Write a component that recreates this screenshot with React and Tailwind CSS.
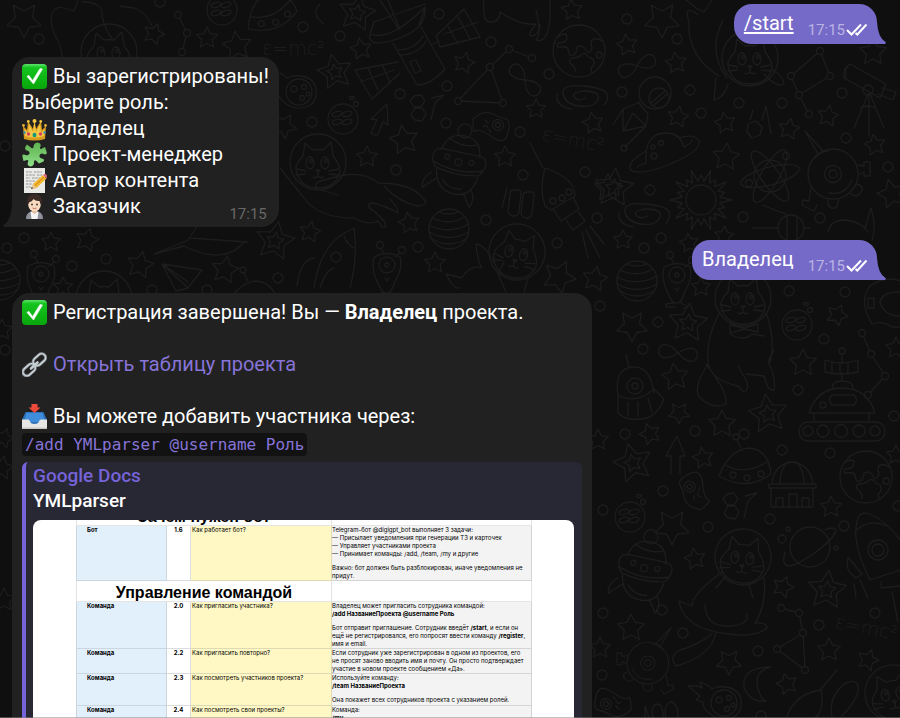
import React from "react";

/* ---------- Wallpaper doodles ---------- */

function starPoints(cx, cy, r, turn) {
  const pts = [];
  for (let i = 0; i < 10; i++) {
    const a = ((turn - 90 + i * 36) * Math.PI) / 180;
    const d = i % 2 ? r * 0.5 : r;
    pts.push(`${(cx + d * Math.cos(a)).toFixed(1)},${(cy + d * Math.sin(a)).toFixed(1)}`);
  }
  return pts.join(" ");
}

const STARS = [
  [662, 20, 18, 180], [627, 45, 11, -10], [676, 63, 11, -8], [678, 117, 11, 10], [725, 123, 11, -10],
  [789, 129, 11, 10], [828, 116, 11, 10], [726, 157, 14, 5], [875, 145, 11, -10], [892, 194, 15, -15],
  [873, 52, 14, 0], [623, 240, 10, 0], [689, 243, 10, -8], [724, 236, 10, 5], [701, 287, 10, 0],
  [632, 326, 16, 180], [837, 315, 11, 25], [803, 363, 14, 0], [896, 348, 11, 0], [675, 377, 14, -8],
  [679, 413, 11, 180], [650, 434, 11, -20], [722, 424, 14, 0], [703, 458, 11, -10], [896, 455, 10, 0],
  [672, 527, 18, 180], [695, 559, 11, -10], [831, 507, 11, 0], [783, 587, 11, 20], [631, 628, 14, 0],
  [829, 650, 12, 0], [729, 662, 13, 180], [868, 660, 11, 20], [787, 684, 11, -15], [361, 49, 11, -10],
  [464, 63, 11, 15], [572, 10, 11, -5], [536, 109, 10, 0], [593, 123, 11, -10], [284, 126, 13, 30],
  [404, 140, 15, -10], [367, 157, 11, 0], [505, 157, 11, 0], [409, 223, 11, -10], [310, 232, 11, 10],
  [435, 263, 11, 0], [559, 277, 17, 25], [595, 279, 13, 10], [608, 188, 14, 0], [24, 20, 18, 180],
  [154, 34, 11, 20], [207, 38, 11, 0], [237, 46, 15, -8], [51, 242, 10, 0], [87, 240, 12, 15],
  [140, 265, 14, 12], [225, 270, 14, 10], [63, 287, 10, 0], [2, 330, 11, 0], [4, 438, 10, 20],
  [598, 440, 11, 0], [600, 648, 11, 0], [4, 600, 12, 0], [2, 468, 12, 10],
];

const DOUBLE_STARS = [
  [614, 188, 20, 5], [688, 323, 20, 5], [768, 414, 20, -8], [633, 463, 20, -15], [827, 590, 20, 5],
  [357, 13, 19, 10], [335, 72, 18, -12], [275, 241, 20, 10],
];

const DOTS = [
  [627, 19], [677, 39], [622, 92], [690, 90], [701, 113], [739, 103], [782, 103], [842, 93], [846, 138],
  [888, 167], [650, 190], [743, 217], [820, 218], [644, 248], [661, 238], [658, 322], [643, 349], [789, 291],
  [845, 292], [824, 339], [798, 390], [894, 416], [695, 431], [744, 434], [625, 434], [782, 450], [830, 453],
  [663, 491], [708, 527], [770, 519], [844, 526], [898, 506], [603, 510], [662, 610], [683, 633], [819, 625],
  [875, 613], [758, 651], [603, 613], [761, 716], [602, 675], [303, 27], [340, 36], [439, 14], [491, 42],
  [549, 74], [447, 86], [400, 94], [446, 123], [312, 122], [520, 132], [523, 175], [585, 172], [396, 170],
  [486, 220], [418, 247], [557, 243], [597, 218], [39, 39], [7, 248], [24, 238], [72, 266], [106, 259],
  [278, 278], [5, 350], [600, 306], [5, 146], [160, 2], [152, 290], [207, 290],
];

const CONSTELLATIONS = [
  [[809, 114], [799, 95], [791, 76], [820, 51], [830, 76], [799, 95]],
  [[532, 58], [509, 49], [490, 67], [458, 101], [503, 103], [490, 67]],
  [[781, 608], [799, 613], [803, 633], [777, 649], [805, 670], [803, 633]],
  [[862, 333], [871, 354], [885, 376], [868, 395]],
  [[178, 15], [187, 33], [182, 52]],
];

function Jupiter({ x, y }) {
  return (
    <g transform={`translate(${x} ${y})`}>
      <circle r="20" />
      <path d="M-17-11Q0-3 16-12M-20-4Q0 6 20-5M-20 3Q0 14 20 3M-17 10Q0 20 17 10M-11-17Q0-13 10-17" />
    </g>
  );
}

function ButtonPlanet({ x, y }) {
  return (
    <g transform={`translate(${x} ${y})`}>
      <circle r="15" />
      <ellipse cx="-6" cy="-5" rx="5" ry="2.5" transform="rotate(-15 -6 -5)" />
      <ellipse cx="4" cy="-5" rx="5" ry="2.5" transform="rotate(-15 4 -5)" />
      <ellipse cx="-6" cy="3" rx="5" ry="2.5" transform="rotate(-15 -6 3)" />
      <ellipse cx="4" cy="3" rx="5" ry="2.5" transform="rotate(-15 4 3)" />
      <circle cx="13" cy="-15" r="2.5" />
      <ellipse cx="9" cy="-21" rx="2.5" ry="1.5" />
    </g>
  );
}

function Earth({ x, y }) {
  return (
    <g transform={`translate(${x} ${y})`}>
      <circle r="26" />
      <path d="M-22-14q10-6 10 0t-9 6q-3 5 3 4t7 2q1 8 5 6t4-8q6-3 9 3t6-2q-3-8 2-9t8 2M-9 12q-2-5 3-5t8-3q4-3 6 0t6 4q3 6-2 9l1 5M-9 12q6 4 5 9" />
      <circle cx="20" cy="4" r="3" />
    </g>
  );
}

function CatHead({ x, y, turn = 0 }) {
  return (
    <g transform={`translate(${x} ${y}) rotate(${turn})`}>
      <circle r="28" />
      <path d="M-15-6l2-13 8 7q6-1 10 0l8-8 2 14M-15-6q-8 8-7 14 4 18 22 18t22-16q0-8-7-16" />
      <ellipse cx="-8" cy="1" rx="4" ry="6" />
      <ellipse cx="7" cy="1" rx="4" ry="6" />
      <circle cx="-7" cy="-1" r="1.5" />
      <circle cx="8" cy="-1" r="1.5" />
      <path d="M-2 8h4l-2 3zM0 11v3q-3 3-5 1M0 14q3 3 5 1M-12 9l-9-2M-12 12l-10 1M11 9l9-2M11 12l10 1" />
    </g>
  );
}

function Alien({ x, y }) {
  return (
    <g transform={`translate(${x} ${y})`}>
      <path d="M-13-12Q0-19 13-12 16 0 8 12q-2 8-6 12h-5q-4-4-7-12-6-12-3-24z" />
      <circle cy="-4" r="8" />
      <circle cy="-4" r="2" />
      <circle cx="-7" cy="-24" r="3.5" />
      <circle cx="15" cy="-19" r="3.5" />
      <path d="M-6-21l3 6M13-16l-5 4M-2 9l2 3 2-3M-4 24l-7 1v3h9M4 24l7 4-6 2" />
    </g>
  );
}

function Infinity8({ x, y, turn }) {
  return (
    <path
      transform={`translate(${x} ${y}) rotate(${turn})`}
      d="M0 0C6-6 10-7 14-7A5 6 0 0 1 14 6C9 6 6 5 0 0S-9-6-14-6A5 6 0 0 0-14 7C-10 7-6 6 0 0z"
    />
  );
}

function Galaxy({ x, y }) {
  return (
    <path
      transform={`translate(${x} ${y})`}
      d="M4 2q-6 4-10 0t3-6 15 0 4 9-18 5-16-12 20-8 24 8-3 11M-24-2q-2 12 14 15"
    />
  );
}

function Probe({ x, y, flip = 1 }) {
  return (
    <g transform={`translate(${x} ${y}) scale(${flip} 1)`}>
      <circle r="25" />
      <circle r="8.500" />
      <circle r="4" />
      <path d="M-15-20l-13-23 18 20M-18-16q6-7 13-7M25-9l6 1v-4h6v14h-6v-4l-6 3M-22 14l-2 13-6-1-1 5 12 6 3-6M-5 25v6q5 6 9 1l2-7M16 19q8 6 12-1 4-6-5-8M19 6q-7 16-23 13" />
    </g>
  );
}

function Teapot({ x, y }) {
  return (
    <g transform={`translate(${x} ${y}) rotate(12)`}>
      <path d="M-25-2q-4-12 6-14h40q10 2 5 14l-3 5q-22 6-45 0zM-25-2q25 9 50 0M-19-15q3-18 20-18t19 18M-12-27q12 6 26 1M-20 5q4 21 22 21T22 5M-12 14q8 9 20 6M-18 14l-12 12q-3-8 6-17M12 24l8 12q5-8-2-18" />
      <circle cx="0" cy="-38" r="7" />
      <circle cx="-12" cy="-9" r="2.500" />
      <circle cx="0" cy="-6" r="3.500" />
      <circle cx="13" cy="-8" r="2.500" />
    </g>
  );
}

function Potato({ x, y, turn }) {
  return (
    <g transform={`translate(${x} ${y}) rotate(${turn})`}>
      <path d="M-14-9q8-6 16-2t13 5 2 14-16 4-16-6-3-12z" />
      <circle cx="7" cy="0" r="5.500" />
      <circle cx="7" cy="0" r="2.500" />
      <path d="M-6-5l3 3M-8 2q3-3 5 1M-2 5l2 2" />
    </g>
  );
}

function Comet({ x, y }) {
  return (
    <g transform={`translate(${x} ${y})`}>
      <circle r="13" />
      <circle cx="-5" cy="-3" r="3" />
      <circle cx="5" cy="-5" r="2.500" />
      <circle cx="3" cy="6" r="2.500" />
      <circle cx="9" cy="2" r="2" />
      <path d="M-11 13q-10-6-10-14l-7-2 4-4-12-10q9-1 14 2l-2-6q9 3 12 7l5-2q20-2 24 12 2 15-10 19-10 3-18-2z" />
    </g>
  );
}

function Hexes({ x, y }) {
  return (
    <path
      transform={`translate(${x} ${y})`}
      d="M-5-14l7-1 4 6-4 6-7 0-4-6zM-4-2l7 0 4 6-4 7-7-1-4-5zM13-12l12-3-9 8-4 17"
    />
  );
}

function Saucer({ x, y, turn = 0 }) {
  return (
    <g transform={`translate(${x} ${y}) rotate(${turn})`}>
      <path d="M-24 10Q-14-16 6-18 26-16 28 8 4 26-24 10zM-18-1Q2 10 24-4" />
      <circle cx="-10" cy="9" r="3" />
      <circle cx="4" cy="12" r="3" />
      <circle cx="18" cy="8" r="3" />
      <path d="M-2-18l-4-8" />
      <circle cx="-7" cy="-29" r="3" />
    </g>
  );
}

function Sun() {
  const rays = [];
  for (let i = 0; i < 40; i++) {
    const a = (i * 9 * Math.PI) / 180;
    const d = i % 2 ? 19 : i % 4 ? 25 : 31;
    rays.push(`${(701 + d * Math.cos(a)).toFixed(1)},${(200 + d * Math.sin(a)).toFixed(1)}`);
  }
  return (
    <>
      <circle cx="701" cy="200" r="15" />
      <polygon points={rays.join(" ")} />
    </>
  );
}

function Wallpaper() {
  return (
    <svg
      aria-hidden="true"
      className="absolute inset-0 h-full w-full"
      viewBox="0 0 900 718"
      preserveAspectRatio="xMidYMin slice"
      fill="none"
      stroke="#1d1d1d"
      strokeWidth="1.3"
      strokeLinejoin="round"
      strokeLinecap="round"
    >
      {STARS.map(([x, y, r, t]) => (
        <polygon key={`${x}-${y}`} points={starPoints(x, y, r, t)} />
      ))}
      {DOUBLE_STARS.map(([x, y, r, t]) => (
        <g key={`${x}-${y}`}>
          <polygon points={starPoints(x, y, r, t)} />
          <polygon points={starPoints(x, y, r * 0.45, t)} />
        </g>
      ))}
      {DOTS.map(([x, y]) => (
        <circle key={`${x}-${y}`} cx={x} cy={y} r="5" />
      ))}
      {CONSTELLATIONS.map((pts, i) => (
        <g key={i}>
          <polyline points={pts.join(" ")} />
          {pts.map(([x, y], j) => (
            <circle key={j} cx={x} cy={y} r="3.500" fill="#0f0f0f" />
          ))}
        </g>
      ))}

      <Jupiter x={637} y={281} />
      <Jupiter x={449} y={229} />
      <Jupiter x={0} y={280} />
      <ButtonPlanet x={797} y={325} />
      <ButtonPlanet x={630} y={517} />
      <ButtonPlanet x={343} y={119} />
      <ButtonPlanet x={222} y={10} />
      <Earth x={866} y={477} />
      <Earth x={579} y={51} />
      <Alien x={677} y={279} />
      <Alien x={387} y={269} />
      <Alien x={41} y={278} />
      <Infinity8 x={637} y={66} turn={-20} />
      <Infinity8 x={678} y={353} turn={10} />
      <Infinity8 x={525} y={80} turn={48} />
      <Galaxy x={643} y={214} />
      <Galaxy x={581} y={96} />
      <Probe x={833} y={174} />
      <g transform="translate(108 110) scale(.833)">
        <Probe x={648} y={664} flip={-1} />
      </g>
      <Teapot x={457} y={168} />
      <Teapot x={643} y={574} />
      <Potato x={491} y={125} turn={0} />
      <Potato x={694} y={492} turn={230} />
      <Potato x={613} y={704} turn={180} />
      <Comet x={299} y={92} />
      <Comet x={724} y={703} />
      <Hexes x={419} y={110} />
      <Hexes x={732} y={508} />
      <Saucer x={268} y={12} turn={-18} />
      <Saucer x={743} y={466} turn={0} />
      <Saucer x={250} y={299} />
      <Sun />

      {/* cats */}
      <CatHead x={318} y={162} />
      <path d="M344 175q22-3 34 8 30 0 42 12 12 10-2 11-20-4-34-20M344 175l-24 6q-8 4-2 8l20 6M280 168l24 30q14 20 50 20 14 8 24 3l4 6q6 2 2-6l-10-10q-10-6-2-8 12 2 26 10 0-6-8-14" />
      <CatHead x={743} y={298} />
      <path d="M720 312q-14 25-12 50 2 18 30 24l6 6q6-2 2-12l-8-14M708 364q-16 24-8 34 14 12 26 6 2-12-20-40M766 312q10 30 4 50M746 374l18 2q4 16 10 14 2-14-6-28l6-12M730 334q14 8 22 0l12 2M730 325l14 3 14-4v8l-14-3-14 4z" />
      <CatHead x={743} y={557} turn={6} />
      <path d="M722 572q-30 22-30 34l-13-5q4 28 50 33 24 4 38-6 0-6-12-5 12-18 9-46M705 604q0 22 22 22t20-12M716 632q-4 24-40 34-8-10 4-16 16-4 32-16M726 576l-10 12M748 582l5 16" />
      <CatHead x={750} y={58} />
      <path d="M697 14q-14-10-8 8-2 34 30 54M723 20q-16 32 4 58M716 78l-2 22q10-2 14-16M764 74q12 14 20 10 0-8-12-14M686 0l10 8 8 4 8-12" />
      <CatHead x={517} y={252} turn={14} />
      <path d="M494 262q-10-18-18-18 2 20 6 24-12-4-20 10l-16-4q8 16 14 14M504 262l-6 12 8 18M528 278l-4 14" />
      <CatHead x={893} y={693} turn={-10} />
      <CatHead x={109} y={52} />
      <path d="M62 57q0-10-8-24-8-22 6-26l14 4 4-10M82 2q22 0 20 14 4 16 10 22M120 6l14 2q12 4 18 18" />
      <CatHead x={104} y={299} />
      <path d="M484 0q-2 22 6 22 10 0 10-10 20 14 36 12-10 12-4 12 8-2 8-12M536 10q6 24 0 30 12 4 14-22V0M320 4q-10 10 4 20" />

      {/* saturns */}
      <path d="M646 163q-2-30 20-30 14 0 18 14M646 151q-18 10-16 18 6 8 38-4 34-14 31-24-5-8-20-3M646 163q-10 4-8 4M684 147q8-4 8-7" />
      <circle cx="654" cy="156" r="3" />
      <circle cx="661" cy="143" r="2.500" />
      <circle cx="653" cy="147" r="2" />
      <circle cx="810" cy="547" r="20" />
      <path d="M824 530q10-4 12 0-2 10-26 26t-26 6q-1-2 1-10" />
      <circle cx="782" cy="539" r="4" />
      <circle cx="788" cy="529" r="2" />
      <circle cx="836" cy="548" r="2" />

      {/* satellite with dish */}
      <path d="M370 34q20 8 55-27 2 22-28 32t-27-5zM425 7l-6 18M370 34l4-12 51-18M388 0l12 30M380 0l18 28M393 43l24 42q14 0 28-16l-24-42M397 50q18 0 26-14M400 55q18 0 26-14M410 62l6-2 5 11-6 2zM398 62l-43 8 17 29 28-26M368 68l10 22M382 64l8 18M360 82l34-12M433 44l7-3M436 36l28-27 16 28-40 10zM448 26l10 18M458 17l12 22M444 34l34-12" />

      {/* astronaut, atom, telescope, small craft */}
      <circle cx="655" cy="93" r="16" />
      <circle cx="659" cy="98" r="10" />
      <path d="M651 103l14-12M653 106l14-12M640 102l-17 7-10 16M623 109v22l23-5 2-12-10-12M623 131l10-18 13 13M646 126l-21 21" />
      <circle cx="624" cy="148" r="3" />
      <g transform="translate(770 176)">
        <circle r="16" />
        <ellipse rx="30" ry="9" transform="rotate(-15)" />
        <ellipse rx="30" ry="9" transform="rotate(55)" />
        <ellipse rx="30" ry="9" transform="rotate(-60)" />
        <circle cx="-21" cy="7" r="3.500" />
        <circle cx="16" cy="-20" r="3.500" />
      </g>
      <path d="M850 64l36 20-6 14-36-20q-2-10 6-14zM850 64q-6 4-4 14M882 88l14 4-3 8-15-6M868 94l-14 34M869 94v42M870 94l14 34M860 108q8-4 15 0" />
      <circle cx="868" cy="90" r="5" />
      <path d="M748 124l8-3 6 6-2 8-8 3-5-6zM750 120l3-10M762 120l4-14 5 28" />
      <circle cx="791" cy="228" r="13" />
      <path d="M787 215v26M797 216v24M762 205l24 9M752 228h26M804 228h6M828 232q2-12 18-12 16 2 22 12M865 228l6-20q6 20 1 32" />

      {/* helmet, rover, bear in capsule */}
      <path d="M872 324q-14-22-2-38 20-14 40 0M872 324q10-4 20 3h12M880 302q2-10 20-10M880 302q4 14 20 14M868 298h6v10h-6z" />
      <path d="M809 413q8-25 33-25t33 25zM833 388q-2-7 9-7t11 7M842 381v-8M825 360q17 6 33 0v12q-17 4-33 0zM832 362v11M840 363v11M848 363v11M842 362v-8M814 413v8M869 413v8M832 395h22q5 5 0 10h-22q-5-5 0-10z" />
      <rect x="799" y="422" width="86" height="19" rx="9" />
      <circle cx="808" cy="431" r="5" />
      <circle cx="823" cy="431" r="6" />
      <circle cx="841" cy="431" r="6.500" />
      <circle cx="859" cy="431" r="6" />
      <circle cx="875" cy="431" r="5" />
      <circle cx="823" cy="405" r="3" />
      <circle cx="842" cy="351" r="3" />
      <path d="M618 395q-4-26 14-28 18-2 22 26M618 395q18 10 36-6l10 10q-8 20-24 20-14 2-22-6zM628 402v14M638 402v14M648 398l4 14M626 355l3 12" />
      <circle cx="635" cy="386" r="8" />
      <circle cx="635" cy="386" r="3" />
      <path d="M677 436l8 20h-5v18M677 436l-11 20h5v18" />

      {/* observatory and rocket */}
      <path d="M769 484h47v4h-47zM771 488h42v19h-42zM772 484q2-20 20-22 18 2 21 22M780 484q0-16 8-22M804 484q0-16-8-22M776 507v-9h7v9M789 507v-13h8v13M802 507v-9h7v9" />
      <path d="M870 580q-20-40-12-62 4-8 14-3 18 8 34 34M856 530q14-12 30-4M870 580l30-10M881 582v6l19-2M848 558q-4 12 8 20l6-4-14-17M854 584l2 14M860 580l8 18M892 592l6 30" />
      <circle cx="878" cy="550" r="10" />
      <circle cx="878" cy="550" r="6" />
      <path d="M771 667q-18 4-13 22 4 12 8 12-16 2-22-14-2-20 27-20z" />
      <path d="M787 716q8-22 34-26 4 20-6 28M820 690l17-20M832 716q-4-18 12-32 16-8 14 8-4 12-16 24M645 718v-12l4 12M653 718q-3-10 3-14 8 0 7 14M666 718q-3-12 4-16 8 0 8 16" />
      <path d="M543 168l-13-25M545 168q-6 20 0 38l6 4 24-14q0-18-30-28zM553 209l8 12 18-12-6-12M566 220l7 10 12-9-7-9M582 232l6 26M586 230l14 28M590 226l14 18" />
      <circle cx="553" cy="201" r="3" />
      <circle cx="562" cy="198" r="3" />
      <circle cx="569" cy="192" r="3" />
      <path d="M507 188l-5 20M512 190h6q4 0 3 4l-2 18q-1 4-5 4t-6-4l2-18q0-4 4-4zM526 192h5q4 0 3 4l-2 18q-1 4-5 4t-6-4l2-18q0-4 4-4z" />
      <path d="M354 228l-8 4q-26 14-32 56M354 228q4 30-4 60M344 236q4 10 10 12M314 258q-14 2-17 28M320 288q6-18 14-20" />
      <circle cx="336" cy="257" r="5" />
      <path d="M387 104l1 21-5-3-6 14-6-3 6-13-6-1zM162 264l40 6-14 18zM162 264l14 27 12-3M162 264l26 18M154 254q20-8 34-14l12-18M154 254l30-8q40 20 60-4M190 238l58 4" />
      <g fill="#1d1d1d" stroke="none" fontFamily="DejaVu Sans" fontWeight="200" fontSize="19">
        <text x="262" y="55">ε=mc²</text>
        <text x="541" y="140" transform="rotate(11 541 140)">ε=mc²</text>
        <text x="834" y="628" transform="rotate(11 834 628)">ε=mc²</text>
      </g>
    </svg>
  );
}

/* ---------- Emoji ---------- */

function Emoji({ label, children }) {
  return (
    <svg role="img" aria-label={label} viewBox="0 0 25 25" className="h-[25px] w-[25px] shrink-0">
      {children}
    </svg>
  );
}

function CheckEmoji() {
  return (
    <Emoji label="✅">
      <defs>
        <linearGradient id="green" x2="0" y2="1">
          <stop stopColor="#5fe36a" />
          <stop offset=".15" stopColor="#14c41e" />
          <stop offset="1" stopColor="#08a60b" />
        </linearGradient>
      </defs>
      <rect width="25" height="25" rx="4" fill="url(#green)" />
      <path d="M5 12.500l1.800-1.200 3.800 5.200L18 4.500l2.500.5L11.500 20z" fill="#fff" stroke="#fff" strokeWidth=".6" strokeLinejoin="round" />
    </Emoji>
  );
}

function CrownEmoji() {
  return (
    <Emoji label="👑">
      <path d="M2 23L1 10l4 4 1-9 5 8 1.500-9L14 13l5-8 1 9 4-4-1 13q-10.500 3-21 0z" fill="#d99a1d" />
      <path d="M3 20l-.5-7L6 17l1-9 4 8 1.500-10L14 16l4-8 1 9 3.500-4-.5 7q-9 3-19 0z" fill="#f3c746" />
      <circle cx="12.500" cy="5" r="2" fill="#f3c443" />
      <circle cx="6.300" cy="5.500" r="1.400" fill="#f3c443" />
      <circle cx="18.700" cy="5.500" r="1.400" fill="#f3c443" />
      <circle cx="1.500" cy="9.500" r="1.400" fill="#e8ae35" />
      <circle cx="23.500" cy="9.500" r="1.400" fill="#e8ae35" />
      <ellipse cx="12.500" cy="19" rx="2" ry="2.300" fill="#129a78" />
      <circle cx="6.500" cy="18" r="1.700" fill="#d63d5c" />
      <circle cx="18.500" cy="18" r="1.700" fill="#d63d5c" />
      <circle cx="2.500" cy="16.500" r="1.200" fill="#2c8fc4" />
      <circle cx="22.500" cy="16.500" r="1.200" fill="#2c8fc4" />
    </Emoji>
  );
}

function PuzzleEmoji() {
  return (
    <Emoji label="🧩">
      <defs>
        <linearGradient id="leaf" x2="0" y2="1">
          <stop stopColor="#5fb04e" />
          <stop offset="1" stopColor="#8fe08a" />
        </linearGradient>
      </defs>
      <path
        d="M5 2.500L9.500 6q1.800 1 2-1 0-4 4-4.500 4 .5 3 4-1.500 2 .5 2.500l4-2 1.800 5.500q0 2.500-2.500 1.800-3.500-1.800-4.800 1-.5 2.800 2.500 3.200 3 .5 1.500 3L17 21.500l-3-3q-1.500-.8-2 1 .3 4.500-3.500 5-4-.8-2.500-4.500 1-2-1-2L1.500 19 .3 14q.2-2 2.700-1.200 3.500 1.500 4.500-1.300.3-2.300-2.500-3Q2.300 7.500 3.500 4.500z"
        fill="url(#leaf)"
      />
    </Emoji>
  );
}

function MemoEmoji() {
  return (
    <Emoji label="📝">
      <path d="M2 0h21v25H2z" fill="#e9e9e7" />
      <path d="M4 4h6m2 0h8M4 7h9m2 0h5M4 10h4m2 0h8M4 13h9M4 16h6M4 19h5" stroke="#8b8b8b" strokeWidth=".9" strokeDasharray="2.500 .7" />
      <path d="M9 21l2-5L21 7l3.500 3.500L14.500 20z" fill="#f3b62f" />
      <path d="M12.500 18L22 9" stroke="#c98213" />
      <path d="M21 7l1.500-1q2-.5 2.500 2l-.5 2.500z" fill="#e0667e" />
      <path d="M9 21l2-5 3.500 4z" fill="#e8c79a" />
      <path d="M9 21l.8-2 1.500 1.300z" fill="#333" />
    </Emoji>
  );
}

function OfficeEmoji() {
  return (
    <Emoji label="🧑🏻‍💼">
      <path d="M4 25q0-7 6-7.500h5q6 .5 6 7.500z" fill="#8e939c" />
      <path d="M8.500 17.500h8L15.500 25h-6z" fill="#f4f4f4" />
      <path d="M10 15h5v3l-2.500 2L10 18z" fill="#e2b795" />
      <ellipse cx="12.500" cy="10.500" rx="6.300" ry="7" fill="#f8dcc2" />
      <path d="M5.500 11Q3.500 0 12.500 0t7 11q-1.500-1-2-4-4 .5-6-2-2 3.500-4 3-1 2-2 3z" fill="#3c2a26" />
      <circle cx="10" cy="10.500" r=".9" fill="#3a2a22" />
      <circle cx="15" cy="10.500" r=".9" fill="#3a2a22" />
      <path d="M10.500 14q2 1.300 4 0" stroke="#c0705a" fill="none" />
    </Emoji>
  );
}

function LinkEmoji() {
  return (
    <Emoji label="🔗">
      <g fill="none" strokeLinecap="round">
        <rect x="-4" y="-6.500" width="8" height="14" rx="4" transform="translate(7.500 17.500) rotate(48)" stroke="#8f999f" strokeWidth="2.800" />
        <rect x="-4" y="-7.500" width="8" height="14" rx="4" transform="translate(17 8) rotate(48)" stroke="#8f999f" strokeWidth="2.800" />
        <rect x="-4" y="-6.500" width="8" height="14" rx="4" transform="translate(7.500 17.500) rotate(48)" stroke="#dfe5e8" />
        <rect x="-4" y="-7.500" width="8" height="14" rx="4" transform="translate(17 8) rotate(48)" stroke="#dfe5e8" />
        <path d="M9 16.500l6.500-6" stroke="#c5cdd1" strokeWidth="2.600" />
      </g>
    </Emoji>
  );
}

function InboxEmoji() {
  return (
    <Emoji label="📥">
      <path d="M3.500 8h18L25 16v9H0v-9z" fill="#2d6fb8" />
      <path d="M4.500 9h16l2.500 9H2z" fill="#3f8ddb" />
      <path d="M0 15.500h6q1.500 0 2 2 1 2.500 4.500 2.500t4.500-2.500q.5-2 2-2h6V25H0z" fill="#e8e6e4" />
      <path d="M0 23.500h25V25H0z" fill="#c9c6c3" />
      <path d="M9.500 0h6v3.500h3L12.500 9l-6-5.500h3z" fill="#ee4a3c" />
    </Emoji>
  );
}

/* ---------- Chat ---------- */

function ReadTicks() {
  return (
    <svg role="img" aria-label="Прочитано" viewBox="0 0 22 13" className="h-[13px] w-[22px]" fill="none" stroke="#fff" strokeWidth="2">
      <path d="M1 7l4.500 4.500L15 1.500" />
      <path d="M9.500 10l1.800 1.500L20.500 1.500" />
    </svg>
  );
}

function OutgoingMessage({ children }) {
  return (
    <article className="relative flex h-10 items-start gap-[14px] self-end rounded-[18px] rounded-br-none bg-[#766ac8] pl-[10px] pr-[9px] pt-[6px]">
      <div className="leading-[26px]">{children}</div>
      <div className="flex items-start gap-px pt-[10px] text-[15px] leading-[20px] text-[#bbb4e3]">
        <time>17:15</time>
        <span className="pt-[3px]">
          <ReadTicks />
        </span>
      </div>
      <svg aria-hidden="true" viewBox="0 0 9 22" className="absolute bottom-0 left-full h-[22px] w-[9px]" fill="#766ac8">
        <path d="M-1 0H0q1 16 8.500 20 1 1-.5 2H-1z" />
      </svg>
    </article>
  );
}

function Line({ emoji, children }) {
  return (
    <p className="flex h-[26px] items-center gap-[6px] whitespace-nowrap leading-[26px]">
      {emoji}
      <span>{children}</span>
    </p>
  );
}

function HelpRow({ height, section, number, question, children }) {
  return (
    <tr className={`${height} align-top`}>
      <th scope="row" className="border border-[#ccd6df] bg-[#e2f0fc] pl-[10px] text-left font-bold">{section}</th>
      <td className="border border-[#d9dde2] text-center font-bold">{number}</td>
      <td className="border border-[#dedbb4] bg-[#fff8c4] pl-px">{question}</td>
      <td className="whitespace-nowrap border border-[#d4d4d4] bg-[#f3f3f3]">{children}</td>
    </tr>
  );
}

function HeadingRow({ children }) {
  return (
    <tr className="h-[21px]">
      <th colSpan={3} className="border border-[#e4e4e4] align-bottom font-['Liberation_Sans',Arial,sans-serif] text-[16px] leading-[16px]">
        {children}
      </th>
      <td className="border border-[#e4e4e4]" />
    </tr>
  );
}

function SheetPreview() {
  return (
    <div className="mt-[7px] overflow-hidden rounded-lg bg-white pl-[43px] font-[Inter,Arial,sans-serif] text-[6px] leading-[8px] text-black">
      <table className="-mt-4 w-[455px] table-fixed border-collapse">
        <colgroup>
          <col className="w-[90px]" />
          <col className="w-[24px]" />
          <col className="w-[141px]" />
          <col className="w-[200px]" />
        </colgroup>
        <tbody>
          <HeadingRow>Зачем нужен бот</HeadingRow>
          <HelpRow height="h-[55px]" section="Бот" number="1.6" question="Как работает бот?">
            <p>Telegram-бот @digigpt_bot выполняет 3 задачи:</p>
            <p>— Присылает уведомления при генерации ТЗ и карточек</p>
            <p>— Управляет участниками проекта</p>
            <p>— Принимает команды: /add, /team, /my и другие</p>
            <p className="mt-[6px]">Важно: бот должен быть разблокирован, иначе уведомления не<br />придут.</p>
          </HelpRow>
          <HeadingRow>Управление командой</HeadingRow>
          <HelpRow height="h-[47px]" section="Команда" number="2.0" question="Как пригласить участника?">
            <p>Владелец может пригласить сотрудника командой:</p>
            <p className="font-bold">/add НазваниеПроекта @username Роль</p>
            <p className="mt-[6px]">Бот отправит приглашение. Сотрудник введёт <b>/start</b>, и если он<br />ещё не регистрировался, его попросят ввести команду <b>/register</b>,<br />имя и email.</p>
          </HelpRow>
          <HelpRow height="h-[25px]" section="Команда" number="2.2" question="Как пригласить повторно?">
            <p>Если сотрудник уже зарегистрирован в одном из проектов, его<br />не просят заново вводить имя и почту. Он просто подтверждает<br />участие в новом проекте сообщением «Да».</p>
          </HelpRow>
          <HelpRow height="h-[32px]" section="Команда" number="2.3" question="Как посмотреть участников проекта?">
            <p>Используйте команду:</p>
            <p className="font-bold">/team НазваниеПроекта</p>
            <p className="mt-[6px]">Она покажет всех сотрудников проекта с указанием ролей.</p>
          </HelpRow>
          <HelpRow height="h-[25px]" section="Команда" number="2.4" question="Как посмотреть свои проекты?">
            <p>Команда:</p>
            <p className="font-bold">/my</p>
          </HelpRow>
        </tbody>
      </table>
    </div>
  );
}

export default function App() {
  return (
    <div className="relative h-screen overflow-hidden bg-[#0f0f0f] font-[Roboto,sans-serif] text-[20px] text-white">
      <Wallpaper />
      <main className="relative flex flex-col gap-[13px] pl-3 pr-[23px] pt-1">
        <OutgoingMessage>
          <a href="#start" className="underline decoration-2 underline-offset-2">/start</a>
        </OutgoingMessage>

        <article className="relative self-start rounded-[18px] rounded-bl-none bg-[#212121] px-[10px] pb-2 pt-[6px]">
          <Line emoji={<CheckEmoji />}>Вы зарегистрированы!</Line>
          <Line>Выберите роль:</Line>
          <Line emoji={<CrownEmoji />}>Владелец</Line>
          <Line emoji={<PuzzleEmoji />}>Проект-менеджер</Line>
          <Line emoji={<MemoEmoji />}>Автор контента</Line>
          <Line emoji={<OfficeEmoji />}>Заказчик</Line>
          <time className="absolute bottom-[3px] right-3 text-[15px] leading-[20px] text-[#686868]">17:15</time>
          <svg aria-hidden="true" viewBox="0 0 9 22" className="absolute bottom-0 right-full h-[22px] w-[9px]" fill="#212121">
            <path d="M10 0H9Q8 16 .5 20q-1 1 .5 2h9z" />
          </svg>
        </article>

        <OutgoingMessage>Владелец</OutgoingMessage>

        <article className="w-[580px] max-w-full self-start rounded-t-[18px] bg-[#212121] px-[10px] pb-2 pt-[6px]">
          <Line emoji={<CheckEmoji />}>
            Регистрация завершена! Вы — <b className="font-bold">Владелец</b> проекта.
          </Line>
          <div className="h-[26px]" />
          <Line emoji={<LinkEmoji />}>
            <a href="#table" className="text-[#8774d8]">Открыть таблицу проекта</a>
          </Line>
          <div className="h-[26px]" />
          <Line emoji={<InboxEmoji />}>Вы можете добавить участника через:</Line>
          <div className="flex h-[27px] items-end">
            <code className="rounded bg-[#121212] px-[3px] font-['DejaVu_Sans_Mono','Liberation_Mono',monospace] text-[16px] leading-[23px] text-[#8774d8]">
              /add YMLparser @username Роль
            </code>
          </div>
          <section className="mt-[6px] rounded-md border-l-4 border-[#7663d9] bg-[#282734] pb-2 pl-[7px] pr-2 pt-px">
            <a href="#docs" className="block text-[19px] font-medium leading-[25px] text-[#7663d9]">Google Docs</a>
            <h2 className="text-[19px] font-medium leading-[25px]">YMLparser</h2>
            <SheetPreview />
          </section>
        </article>
      </main>
      <div className="absolute inset-x-0 bottom-0 h-px bg-[#888]/50" />
    </div>
  );
}
